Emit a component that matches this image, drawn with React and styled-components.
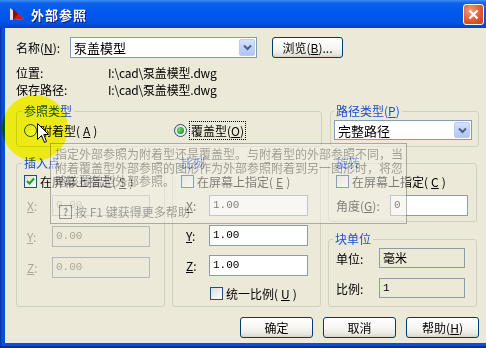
import React from "react";
import styled, { createGlobalStyle } from "styled-components";

const FONT = `"Noto Sans CJK SC", "Liberation Sans", sans-serif`;

const GlobalStyle = createGlobalStyle`
  html, body {
    margin: 0;
    padding: 0;
    background: #ece9d8;
  }
  body {
    font-family: ${FONT};
    font-size: 12px;
  }
`;

const Window = styled.div`
  position: relative;
  width: 486px;
  height: 348px;
  display: flex;
  flex-direction: column;
  overflow: hidden;
  font-family: ${FONT};
  font-size: 12px;
  color: #000;
`;

const TitleBar = styled.div`
  flex: none;
  height: 28px;
  display: flex;
  align-items: center;
  gap: 6px;
  padding: 0 2px 0 9px;
  background: linear-gradient(
    #3d8df5 0%,
    #0c61ea 12%,
    #0058ee 45%,
    #0053e6 80%,
    #0143c8 100%
  );
`;

const Title = styled.span`
  color: #fff;
  font-weight: bold;
  font-size: 13px;
  letter-spacing: 1px;
  text-shadow: 1px 1px 0 #0a1c78;
`;

const CloseButton = styled.span`
  margin-left: auto;
  width: 19px;
  height: 19px;
  display: flex;
  align-items: center;
  justify-content: center;
  border: 1px solid #fff;
  border-radius: 3px;
  background: radial-gradient(circle at 35% 30%, #f0a080, #e05a30 55%, #c2400f);
`;

const Frame = styled.div`
  flex: 1;
  display: flex;
  padding: 0 0 5px 5px;
  background: linear-gradient(90deg, #0a2c9c 0, #0a4fd8 2px);
  box-shadow: inset 0 -2px 0 #0a2c9c;
`;

const Content = styled.div`
  flex: 1;
  display: flex;
  flex-direction: column;
  padding: 9px 7px 0 11px;
  background: #ece9d8;
`;

const NameRow = styled.div`
  display: flex;
  align-items: center;
  height: 21px;
`;

const Label = styled.span`
  flex: none;
  width: ${(p) => p.$w || 0}px;
  padding-left: ${(p) => p.$pl || 0}px;
  box-sizing: border-box;
  white-space: nowrap;
  color: ${(p) => (p.$disabled ? "#aca899" : "#000")};
`;

const Combo = styled.div`
  flex: none;
  box-sizing: border-box;
  width: ${(p) => p.$w}px;
  height: ${(p) => p.$h || 21}px;
  display: flex;
  align-items: center;
  padding: 0 1px 0 3px;
  border: 1px solid #7f9db9;
  background: #fff;
  margin-left: ${(p) => p.$ml || 0}px;
`;

const ComboText = styled.span`
  flex: 1;
  font-size: 13px;
`;

const DropButton = styled.span`
  width: 16px;
  height: ${(p) => p.$h || 17}px;
  display: flex;
  align-items: center;
  justify-content: center;
  box-sizing: border-box;
  border: 1px solid #b9cdf7;
  border-radius: 2px;
  background: linear-gradient(#d6e2fd, #c1d3fb 50%, #aec5f6);
`;

const Button = styled.button`
  flex: none;
  box-sizing: border-box;
  width: ${(p) => p.$w}px;
  height: 21px;
  margin-left: ${(p) => p.$ml || 0}px;
  padding: 0;
  border: 1px solid #003c74;
  border-radius: 3px;
  background: linear-gradient(#ffffff, #f6f5f0 55%, #e6e4dc 88%, #d6d0c5);
  font-family: ${FONT};
  font-size: 12px;
  color: #000;
`;

const InfoGrid = styled.div`
  display: grid;
  grid-template-columns: 92px 1fr;
  grid-auto-rows: 17px;
  align-items: center;
  margin-top: 6px;
  white-space: nowrap;
`;

const PathValue = styled.span`
  letter-spacing: -0.2px;
`;

const GroupRow = styled.div`
  display: flex;
  gap: ${(p) => p.$gap}px;
  margin-top: ${(p) => p.$mt}px;
`;

const Column = styled.div`
  display: flex;
  flex-direction: column;
  gap: 10px;
`;

const Group = styled.fieldset`
  margin: 0;
  min-width: 0;
  box-sizing: border-box;
  width: ${(p) => p.$w}px;
  height: ${(p) => p.$h}px;
  padding: 0 4px 0 ${(p) => p.$pl}px;
  border: 1px solid #d0d0bf;
  border-radius: 3px;
`;

const Legend = styled.legend`
  padding: 0 2px;
  margin-left: -2px;
  line-height: 14px;
  color: #1a4fd0;
`;

const RadioRow = styled.div`
  display: flex;
  align-items: center;
  height: 16px;
  margin-top: 4px;
`;

const RadioItem = styled.label`
  display: flex;
  align-items: center;
  gap: 3px;
  width: ${(p) => p.$w || "auto"}px;
  white-space: nowrap;
`;

const Radio = styled.span`
  position: relative;
  flex: none;
  width: 13px;
  height: 13px;
  box-sizing: border-box;
  border: 1px solid #1c5180;
  border-radius: 50%;
  background: linear-gradient(135deg, #dcdcd7, #ffffff);

  &::after {
    content: "";
    display: ${(p) => (p.$checked ? "block" : "none")};
    position: absolute;
    left: 2px;
    top: 2px;
    width: 7px;
    height: 7px;
    border-radius: 50%;
    background: radial-gradient(circle at 35% 35%, #6fdc6f, #21a121 70%);
  }
`;

const Focus = styled.span`
  padding: 0 1px;
  outline: 1px dotted #000;
  outline-offset: 0;
`;

const CheckRow = styled.label`
  display: flex;
  align-items: center;
  gap: 3px;
  height: 16px;
  margin-top: ${(p) => p.$mt || 0}px;
  padding-left: ${(p) => p.$pl || 0}px;
  white-space: nowrap;
`;

const Check = styled.span`
  flex: none;
  width: 13px;
  height: 13px;
  box-sizing: border-box;
  display: flex;
  align-items: center;
  justify-content: center;
  border: 1px solid #1c5180;
  background: linear-gradient(135deg, #dcdcd7, #ffffff);
`;

const FieldRows = styled.div`
  display: flex;
  flex-direction: column;
  gap: ${(p) => p.$gap}px;
  margin-top: ${(p) => p.$mt}px;
`;

const FieldRow = styled.div`
  display: flex;
  align-items: center;
  height: ${(p) => p.$h || 21}px;
`;

const TextBox = styled.div`
  flex: none;
  box-sizing: border-box;
  width: ${(p) => p.$w}px;
  height: ${(p) => p.$h || 21}px;
  padding-left: 3px;
  line-height: ${(p) => (p.$h || 21) - 2}px;
  border: 1px solid ${(p) => (p.$disabled ? "#b4b7bb" : "#8d9bab")};
  background: ${(p) => (p.$disabled || p.$readonly ? "#ece9d8" : "#fff")};
  color: ${(p) => (p.$disabled ? "#aca899" : "#000")};
  font-family: ${(p) => (p.$mono ? `"Liberation Mono", ${FONT}` : FONT)};
  font-size: ${(p) => (p.$mono ? 11 : 12)}px;
  white-space: nowrap;
`;

const Buttons = styled.div`
  display: flex;
  justify-content: flex-end;
  gap: 10px;
  margin-top: 10px;
`;

const Tooltip = styled.div`
  position: absolute;
  left: 50px;
  top: 143px;
  width: 357px;
  height: 81px;
  box-sizing: border-box;
  padding: 3px 0 0 4px;
  border: 1px solid #6e6e6e;
  background: #f3f1e8;
  color: #555;
  opacity: 0.5;
  white-space: nowrap;
`;

const TipText = styled.div`
  line-height: 13.5px;
`;

const TipHelp = styled.div`
  display: flex;
  align-items: center;
  gap: 3px;
  height: 16px;
  margin-top: 16px;
  padding-left: 4px;
`;

const HelpIcon = styled.span`
  width: 11px;
  height: 12px;
  display: flex;
  align-items: center;
  justify-content: center;
  border: 1px solid #444;
  font-size: 10px;
  font-weight: bold;
`;

const Spotlight = styled.div`
  position: absolute;
  left: 2px;
  top: 95px;
  width: 66px;
  height: 66px;
  border-radius: 50%;
  background: radial-gradient(circle, #ffff18 0%, #ffff18 88%, rgba(255, 255, 24, 0) 100%);
  mix-blend-mode: multiply;
`;

const Cursor = styled.svg`
  position: absolute;
  left: 37px;
  top: 123px;
`;

const Chevron = () => (
  <svg width="9" height="7" viewBox="0 0 9 7">
    <path d="M1 1.5 L4.5 5 L8 1.5" fill="none" stroke="#4d6185" strokeWidth="2" />
  </svg>
);

const Tick = () => (
  <svg width="9" height="9" viewBox="0 0 9 9">
    <path d="M1 4 L3.5 6.5 L8 1.5" fill="none" stroke="#21a121" strokeWidth="2" />
  </svg>
);

const AppIcon = () => (
  <svg width="16" height="14" viewBox="0 0 16 14">
    <path d="M1 1 L15 12 L1 13 Z" fill="#e8e4e0" />
    <path d="M4 2 L15 12 L4 13 Z" fill="#d01818" />
    <path d="M4 2 L9 7 L4 13 Z" fill="#8c0c0c" />
  </svg>
);

export default function App() {
  return (
    <>
      <GlobalStyle />
      <Window>
        <TitleBar>
          <AppIcon />
          <Title>外部参照</Title>
          <CloseButton>
            <svg width="11" height="11" viewBox="0 0 11 11">
              <path d="M1.5 1.5 L9.5 9.5 M9.5 1.5 L1.5 9.5" stroke="#fff" strokeWidth="2.2" />
            </svg>
          </CloseButton>
        </TitleBar>
        <Frame>
          <Content>
            <NameRow>
              <Label $w={54}>
                名称(<u>N</u>):
              </Label>
              <Combo $w={187}>
                <ComboText>泵盖模型</ComboText>
                <DropButton>
                  <Chevron />
                </DropButton>
              </Combo>
              <Button $w={71} $ml={15}>
                浏览(<u>B</u>)...
              </Button>
            </NameRow>

            <InfoGrid>
              <span>位置:</span>
              <PathValue>I:\cad\泵盖模型.dwg</PathValue>
              <span>保存路径:</span>
              <PathValue>I:\cad\泵盖模型.dwg</PathValue>
            </InfoGrid>

            <GroupRow $gap={8} $mt={6}>
              <Group $w={306} $h={43} $pl={7}>
                <Legend>参照类型</Legend>
                <RadioRow>
                  <RadioItem $w={150}>
                    <Radio />
                    附着型(<u>A</u>)
                  </RadioItem>
                  <RadioItem>
                    <Radio $checked />
                    <Focus>
                      覆盖型(<u>O</u>)
                    </Focus>
                  </RadioItem>
                </RadioRow>
              </Group>
              <Group $w={149} $h={43} $pl={5}>
                <Legend>
                  路径类型(<u>P</u>)
                </Legend>
                <RadioRow>
                  <Combo $w={138} $h={20} $ml={-2}>
                    <ComboText>完整路径</ComboText>
                    <DropButton $h={16}>
                      <Chevron />
                    </DropButton>
                  </Combo>
                </RadioRow>
              </Group>
            </GroupRow>

            <GroupRow $gap={7} $mt={9}>
              <Group $w={149} $h={151} $pl={7}>
                <Legend>插入点</Legend>
                <CheckRow $mt={3}>
                  <Check>
                    <Tick />
                  </Check>
                  在屏幕上指定(<u>S</u>)
                </CheckRow>
                <FieldRows $gap={10} $mt={6}>
                  {["X", "Y", "Z"].map((a) => (
                    <FieldRow key={a}>
                      <Label $w={28} $pl={3} $disabled>
                        <u>{a}</u>:
                      </Label>
                      <TextBox $w={98} $disabled $mono>
                        0.00
                      </TextBox>
                    </FieldRow>
                  ))}
                </FieldRows>
              </Group>

              <Group $w={149} $h={151} $pl={8}>
                <Legend>比例</Legend>
                <CheckRow $mt={3}>
                  <Check />
                  在屏幕上指定(<u>E</u>)
                </CheckRow>
                <FieldRows $gap={9} $mt={6}>
                  {["X", "Y", "Z"].map((a) => (
                    <FieldRow key={a}>
                      <Label $w={28} $pl={5}>
                        <u>{a}</u>:
                      </Label>
                      <TextBox $w={99} $mono>
                        1.00
                      </TextBox>
                    </FieldRow>
                  ))}
                </FieldRows>
                <CheckRow $mt={9} $pl={29}>
                  <Check />
                  统一比例(<u>U</u>)
                </CheckRow>
              </Group>

              <Column>
                <Group $w={149} $h={66} $pl={7}>
                  <Legend>旋转</Legend>
                  <CheckRow $mt={3}>
                    <Check />
                    在屏幕上指定(<u>C</u>)
                  </CheckRow>
                  <FieldRows $gap={0} $mt={6}>
                    <FieldRow>
                      <Label $w={54}>
                        角度(<u>G</u>):
                      </Label>
                      <TextBox $w={78} $mono>
                        0
                      </TextBox>
                    </FieldRow>
                  </FieldRows>
                </Group>
                <Group $w={149} $h={75} $pl={6}>
                  <Legend>块单位</Legend>
                  <FieldRows $gap={10} $mt={2}>
                    <FieldRow $h={20}>
                      <Label $w={44} $pl={1}>
                        单位:
                      </Label>
                      <TextBox $w={86} $h={20} $readonly>
                        毫米
                      </TextBox>
                    </FieldRow>
                    <FieldRow $h={20}>
                      <Label $w={44} $pl={1}>
                        比例:
                      </Label>
                      <TextBox $w={86} $h={20} $readonly $mono>
                        1
                      </TextBox>
                    </FieldRow>
                  </FieldRows>
                </Group>
              </Column>
            </GroupRow>

            <Buttons>
              <Button $w={73}>确定</Button>
              <Button $w={73}>取消</Button>
              <Button $w={73}>
                帮助(<u>H</u>)
              </Button>
            </Buttons>
          </Content>
        </Frame>

        <Tooltip>
          <TipText>
            指定外部参照为附着型还是覆盖型。与附着型的外部参照不同，当
            <br />
            附着覆盖型外部参照的图形作为外部参照附着到另一图形时，将忽
            <br />
            略该覆盖型外部参照。
          </TipText>
          <TipHelp>
            <HelpIcon>?</HelpIcon>按 F1 键获得更多帮助
          </TipHelp>
        </Tooltip>
        <Spotlight />
        <Cursor width="13" height="21" viewBox="0 0 13 21">
          <path
            d="M0.5 0.5 L0.5 16.5 L4.5 12.5 L7.5 19.5 L9.5 18.5 L6.8 11.5 L11.5 11.5 Z"
            fill="#fff"
            stroke="#000"
            strokeWidth="1"
          />
        </Cursor>
      </Window>
    </>
  );
}
